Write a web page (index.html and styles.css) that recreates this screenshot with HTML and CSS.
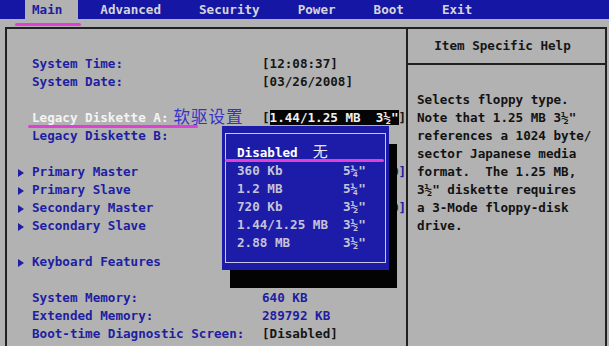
FILE: index.html
```html
<!DOCTYPE html>
<html lang="en">
<head>
<meta charset="utf-8">
<title>BIOS Setup - Main</title>
<link rel="stylesheet" href="styles.css">
</head>
<body>
<nav class="menubar">
  <span class="tab active">Main</span>
  <span class="tab">Advanced</span>
  <span class="tab">Security</span>
  <span class="tab">Power</span>
  <span class="tab">Boot</span>
  <span class="tab">Exit</span>
</nav>
<span class="mark mark-main"></span>

<div class="frame">
  <section class="left">
    <div class="row"><span class="lbl">System Time:</span><span class="val">[12:08:37]</span></div>
    <div class="row"><span class="lbl">System Date:</span><span class="val">[03/26/2008]</span></div>
    <div class="row"></div>
    <div class="row"><span class="lbl sel">Legacy Diskette A:<span class="cn">软驱设置</span></span><span class="val">[<span class="hl">1.44/1.25 MB  3½"</span>]</span></div>
    <div class="row"><span class="lbl">Legacy Diskette B:</span></div>
    <div class="row"></div>
    <div class="row"><span class="lbl"><span class="arrow"></span>Primary Master</span><span class="val sub tail">D]</span></div>
    <div class="row"><span class="lbl"><span class="arrow"></span>Primary Slave</span></div>
    <div class="row"><span class="lbl"><span class="arrow"></span>Secondary Master</span><span class="val sub tail">D]</span></div>
    <div class="row"><span class="lbl"><span class="arrow"></span>Secondary Slave</span></div>
    <div class="row"></div>
    <div class="row"><span class="lbl"><span class="arrow"></span>Keyboard Features</span></div>
    <div class="row"></div>
    <div class="row"><span class="lbl">System Memory:</span><span class="val info">640 KB</span></div>
    <div class="row"><span class="lbl">Extended Memory:</span><span class="val info">289792 KB</span></div>
    <div class="row"><span class="lbl">Boot-time Diagnostic Screen:</span><span class="val">[Disabled]</span></div>
  </section>
  <aside class="right">
    <div class="help-head">Item Specific Help</div>
    <div class="help-body">Selects floppy type.
Note that 1.25 MB 3½"
references a 1024 byte/
sector Japanese media
format.  The 1.25 MB,
3½" diskette requires
a 3-Mode floppy-disk
drive.</div>
  </aside>
</div>

<span class="mark mark-legacy"></span>

<div class="popup">
  <div class="popup-inner">
    <div class="opt cur"><span class="oname">Disabled</span><span class="cn-small">无</span></div>
    <div class="opt"><span class="oname">360 Kb</span><span>5¼"</span></div>
    <div class="opt"><span class="oname">1.2 MB</span><span>5¼"</span></div>
    <div class="opt"><span class="oname">720 Kb</span><span>3½"</span></div>
    <div class="opt"><span class="oname">1.44/1.25 MB</span><span>3½"</span></div>
    <div class="opt"><span class="oname">2.88 MB</span><span>3½"</span></div>
  </div>
</div>
<span class="mark mark-disabled"></span>
</body>
</html>
```

FILE: styles.css
```css
* { box-sizing: border-box; }

html, body {
  margin: 0;
  padding: 0;
  width: 609px;
  height: 346px;
  overflow: hidden;
}

body {
  position: relative;
  background: #b2b2b2;
  font-family: "DejaVu Sans Mono", "Liberation Mono", monospace;
  font-size: 12.6px;
  font-weight: bold;
  color: #161616;
}

.menubar {
  display: flex;
  gap: 38px;
  height: 19px;
  line-height: 19px;
  padding-left: 32px;
  background: #1616a4;
  color: #d4d4dc;
  white-space: pre;
}

.tab.active {
  background: #b2b2b2;
  color: #1c1ca0;
  padding: 0 16px 0 7px;
  margin: 0 -16px 0 -7px;
}

.frame {
  margin: 8px 2px 0 5px;
  height: 319px;
  border: 2px solid #202020;
  border-bottom: none;
  display: grid;
  grid-template-columns: 401px 1fr;
}

.left {
  border-right: 2px solid #202020;
  padding: 26px 0 0 25px;
}

.row {
  display: grid;
  grid-template-columns: 230px auto;
  height: 18px;
  line-height: 18px;
  white-space: pre;
}

.lbl {
  color: #1e1ea2;
  position: relative;
  display: flex;
  align-items: center;
}

.lbl.sel { color: #f4f4f4; }

.cn {
  font-family: "Noto Sans CJK SC", sans-serif;
  font-weight: normal;
  font-size: 16.5px;
  color: #3434c4;
  margin-left: 5px;
  letter-spacing: 1px;
  position: relative;
  top: -2px;
}

.arrow {
  position: absolute;
  left: -14px;
  top: 6px;
  width: 0;
  height: 0;
  border-top: 4px solid transparent;
  border-bottom: 4px solid transparent;
  border-left: 6px solid #1e1ea2;
}

.val { color: #161616; }
.val.info { color: #1e1ea2; }
.val.sub { color: #1e1ea2; }
.val.tail { padding-left: 129px; }

.hl {
  background: #050505;
  color: #f0f0f0;
}

.help-head {
  height: 36px;
  line-height: 34px;
  text-align: center;
  border-bottom: 2px solid #202020;
  padding-right: 8px;
}

.help-body {
  padding: 26px 0 0 9px;
  line-height: 18px;
  white-space: pre;
  color: #121212;
}

.popup {
  position: absolute;
  left: 222px;
  top: 126px;
  width: 167px;
  height: 144px;
  background: #1c1ca8;
  box-shadow: 8px 18px 0 #030303;
  padding: 7px 3px;
}

.popup-inner {
  height: 100%;
  border: 1px solid #c8c8dc;
  padding: 10px 0 0 11px;
}

.opt {
  display: flex;
  height: 18px;
  line-height: 18px;
  color: #c4c4d8;
  white-space: pre;
}

.opt .oname { width: 106px; }

.opt.cur { color: #ffffff; }
.opt.cur .oname { width: auto; }

.cn-small {
  font-family: "Noto Sans CJK SC", sans-serif;
  font-weight: normal;
  font-size: 15px;
  margin-left: 15px;
  color: #e8e8f4;
  position: relative;
  top: -2px;
}

.mark {
  position: absolute;
  height: 3px;
  background: #e040d4;
  border-radius: 2px;
}

.mark-main { left: 15px; top: 23px; width: 66px; }
.mark-legacy { left: 28px; top: 125px; width: 170px; }
.mark-disabled { left: 225px; top: 159px; width: 159px; }
```
